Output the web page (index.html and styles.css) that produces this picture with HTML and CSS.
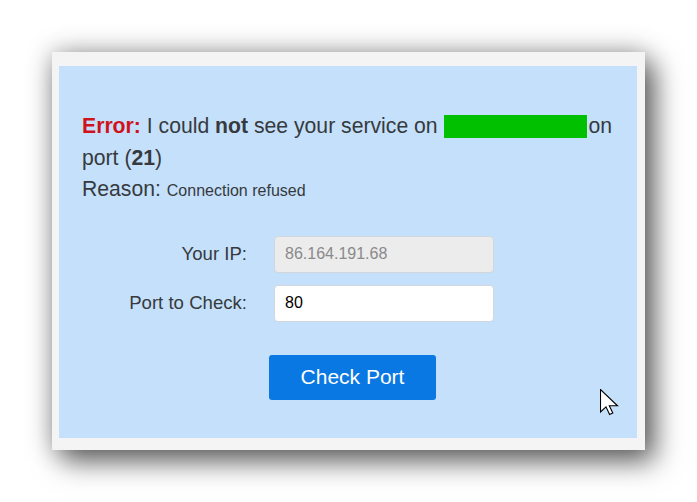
FILE: index.html
```html
<!DOCTYPE html>
<html lang="en">
<head>
<meta charset="utf-8">
<title>Port Check</title>
<link rel="stylesheet" href="styles.css">
</head>
<body>
<div class="frame">
  <div class="panel">
    <p class="message"><span class="err">Error:</span> I could <b>not</b> see your service on <span class="redact"></span>on port (<b>21</b>)</p>
    <p class="reason">Reason: <span class="reason-text">Connection refused</span></p>
    <form class="form">
      <label class="label" for="ip">Your IP:</label>
      <input class="field field-ro" id="ip" type="text" value="86.164.191.68" readonly>
      <label class="label" for="port">Port to Check:</label>
      <input class="field" id="port" type="text" value="80">
      <div class="actions">
        <button class="btn" type="button">Check Port</button>
      </div>
    </form>
    <svg class="cursor" width="20" height="27" viewBox="0 0 20 27" aria-hidden="true">
      <polygon points="0.5,0.5 0.5,23 6,17.8 9.6,25.5 12.8,24 9.3,16.8 17.5,16.8" fill="#fff" stroke="#000" stroke-width="1.1" stroke-linejoin="miter"/>
    </svg>
  </div>
</div>
</body>
</html>
```

FILE: styles.css
```css
html, body {
  margin: 0;
  background: #ffffff;
}

body {
  min-height: 502px;
  box-sizing: border-box;
  padding: 52px 0 0 52px;
  font-family: "Liberation Sans", Arial, sans-serif;
  color: #363a3e;
}

.frame {
  width: 593px;
  height: 398px;
  box-sizing: border-box;
  padding: 14px 8px 12px 7px;
  background: #f4f4f4;
  box-shadow: 0 0 24px rgba(0, 0, 0, 0.3), 10px 12px 26px rgba(0, 0, 0, 0.55);
}

.panel {
  position: relative;
  height: 100%;
  box-sizing: border-box;
  padding: 44px 23px 0 23px;
  background: #c5e0fa;
}

.message,
.reason {
  margin: 0;
  font-size: 21.2px;
  line-height: 31.5px;
}

.err {
  color: #d0121b;
  font-weight: bold;
}

.redact {
  display: inline-block;
  width: 143px;
  height: 23px;
  background: #00c000;
  vertical-align: -5px;
  margin-right: 2px;
}

.reason-text {
  font-size: 16px;
}

.form {
  display: grid;
  grid-template-columns: 165px 220px;
  column-gap: 27px;
  row-gap: 12px;
  align-items: center;
  margin: 29px 0 0 0;
}

.label {
  text-align: right;
  font-size: 18.6px;
  color: #363a3e;
}

.field {
  box-sizing: border-box;
  width: 220px;
  height: 37px;
  padding: 0 10px;
  border: 1px solid #d2d6da;
  border-radius: 4px;
  background: #ffffff;
  font-family: "Liberation Sans", Arial, sans-serif;
  font-size: 16px;
  color: #000000;
  outline: none;
}

.field-ro {
  background: #ececec;
  color: #8a8a8a;
}

.actions {
  grid-column: 1 / -1;
  padding: 21px 0 0 187px;
}

.btn {
  width: 167px;
  height: 45px;
  border: none;
  border-radius: 3px;
  background: #0a78e2;
  color: #ffffff;
  font-family: "Liberation Sans", Arial, sans-serif;
  font-size: 21px;
  cursor: pointer;
}

.cursor {
  position: absolute;
  left: 541px;
  top: 323px;
}
```
